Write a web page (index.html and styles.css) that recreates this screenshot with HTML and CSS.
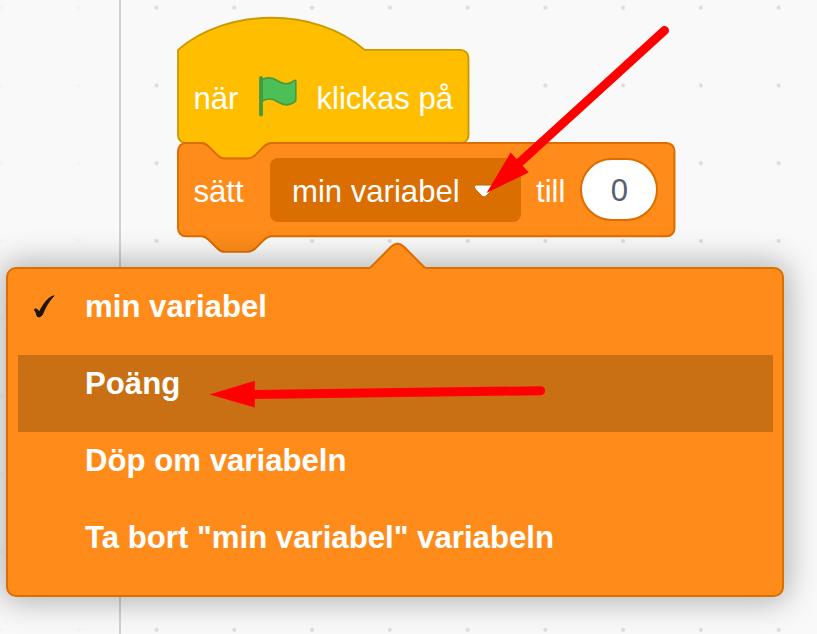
FILE: index.html
```html
<!DOCTYPE html>
<html lang="sv">
<head>
<meta charset="utf-8">
<title>Variabelblock</title>
<link rel="stylesheet" href="styles.css">
</head>
<body>
<main class="workspace">
  <svg class="grid" width="817" height="634" aria-hidden="true">
    <defs>
      <pattern id="dots" x="117.6" y="-31.2" width="77.77" height="77.77" patternUnits="userSpaceOnUse">
        <circle cx="38.9" cy="38.9" r="2.05" fill="#dcdcdc"/>
      </pattern>
    </defs>
    <rect width="817" height="634" fill="url(#dots)"/>
  </svg>
  <div class="flyout"></div>

  <section class="stack">
    <div class="block block-hat">
      <svg class="shape" width="294" height="145" viewBox="0 0 151.2 74.6" aria-hidden="true">
        <path transform="translate(0 20)" fill="#ffbf00" stroke="#cc9900" d="M0,0c25,-22 71,-22 96,0H145.4a4,4 0 0,1 4,4v40a4,4 0 0,1 -4,4H48c-2,0 -3,1 -4,2l-4,4c-1,1 -2,2 -4,2h-12c-2,0 -3,-1 -4,-2l-4,-4c-1,-1 -2,-2 -4,-2H4a4,4 0 0,1 -4,-4z"/>
      </svg>
      <span class="label">när</span>
      <svg class="flag" width="40" height="42" viewBox="0 0 40 42" aria-hidden="true">
        <path d="M3.500 4.500C9 2 15 2.500 20 6C25.500 9.800 31 9.500 35.800 5.800Q37.800 4.500 37.800 6.500V25C37.800 26 37.500 26.500 36.500 27.200C31 31 25.500 30.500 20 27C15 23.200 9 23.300 3.500 26.500Z" fill="#4cbf56" stroke="#45993d" stroke-width="1.600" stroke-linejoin="round"/>
        <path d="M3 3V39.500" stroke="#45993d" stroke-width="3.800" stroke-linecap="round"/>
      </svg>
      <span class="label">klickas på</span>
    </div>
    <div class="block block-set">
      <svg class="shape" width="500" height="114" viewBox="0 0 257.2 58.64" aria-hidden="true">
        <path fill="#ff8c1a" stroke="#db6e00" d="M0,4A4,4 0 0,1 4,0H12c2,0 3,1 4,2l4,4c1,1 2,2 4,2h12c2,0 3,-1 4,-2l4,-4c1,-1 2,-2 4,-2H251.400a4,4 0 0,1 4,4v40a4,4 0 0,1 -4,4H48c-2,0 -3,1 -4,2l-4,4c-1,1 -2,2 -4,2h-12c-2,0 -3,-1 -4,-2l-4,-4c-1,-1 -2,-2 -4,-2H4a4,4 0 0,1 -4,-4z"/>
      </svg>
      <span class="label">sätt</span>
      <div class="dropdown">
        <span>min variabel</span>
        <svg class="caret" width="24" height="18" viewBox="0 0 24 18" aria-hidden="true">
          <path d="M4.500 2H19.500Q23 2.500 20.800 6L14.200 13Q12 15 9.800 13L3.200 6Q1 2.500 4.500 2Z" fill="#fff" stroke="#c46300" stroke-width="1"/>
        </svg>
      </div>
      <span class="label">till</span>
      <div class="number">0</div>
    </div>
  </section>

  <section class="menu">
    <svg class="pointer" width="58" height="28" viewBox="0 0 58 28" aria-hidden="true">
      <path d="M0 28L1.500 25.500L22 4.800Q28.500 -1.600 35 4.800L55.500 25.500L58 28Z" fill="#ff8c1a"/>
      <path d="M1 26L22 4.800Q28.500 -1.600 35 4.800L56 26" fill="none" stroke="#db6e00" stroke-width="2"/>
    </svg>
    <div class="item">
      <svg class="check" width="24" height="26" viewBox="0 0 24 26" aria-hidden="true">
        <path d="M2.300 15.500Q4.500 13.500 7.300 18C11.500 10 15.500 3.500 22 1.800C16.500 7.500 13.500 13 10.200 21Q7.500 24 5.300 22.500Q4.200 18 2.300 15.500Z" fill="#211303" stroke="#211303" stroke-width="1" stroke-linejoin="round"/>
      </svg>
      <span>min variabel</span>
    </div>
    <div class="item item-active"><span>Poäng</span></div>
    <div class="item"><span>Döp om variabeln</span></div>
    <div class="item"><span>Ta bort "min variabel" variabeln</span></div>
  </section>

  <svg class="arrows" width="817" height="634" aria-hidden="true">
    <g fill="#f00" stroke="#f00">
      <path d="M664.500 30.500L518 164" stroke-width="9" stroke-linecap="round"/>
      <path d="M486.500 193L510.700 152.500L528.700 172.500Z" stroke="none"/>
      <path d="M540.700 390.700L254 394.500" stroke-width="9" stroke-linecap="round"/>
      <path d="M209.500 394.400L254.800 380.800V407.500Z" stroke="none"/>
    </g>
  </svg>
</main>
</body>
</html>
```
FILE: styles.css
```css
* {
  box-sizing: border-box;
}

body {
  margin: 0;
  font-family: "Liberation Sans", Arial, sans-serif;
  font-size: 31.1px;
  line-height: 36px;
  color: #fff;
}

.workspace {
  position: relative;
  width: 817px;
  height: 634px;
  overflow: hidden;
  background: #f9f9f9;
}

.grid,
.arrows {
  position: absolute;
  inset: 0;
}

.flyout {
  position: absolute;
  inset: 0 auto 0 0;
  width: 121px;
  background: rgba(249, 249, 249, 0.8);
  border-right: 2px solid #d0d0d0;
}

.stack {
  position: relative;
  padding: 49.3px 0 0 178px;
}

.block {
  position: relative;
  display: flex;
  align-items: center;
  height: 93.3px;
  padding-left: 15.5px;
  white-space: nowrap;
}

.block > * {
  position: relative;
}

.block > .shape {
  position: absolute;
  left: 0;
  top: 0;
  overflow: visible;
}

.block-hat > .shape {
  top: -38.4px;
}

.block-set {
  width: 497px;
}

.label {
  position: relative;
  top: 2.6px;
}

.flag {
  margin: 0 18px 0 20px;
}

.dropdown {
  display: flex;
  align-items: center;
  width: 251px;
  height: 64px;
  margin-left: 26.4px;
  padding: 5px 0 0 22px;
  border-radius: 8px;
  background: #db6e00;
}

.block > .dropdown {
  top: 0.5px;
}

.caret {
  margin-left: 12.5px;
}

.block-set .label + .number {
  margin-left: 15px;
}

.dropdown + .label {
  margin-left: 15px;
}

.number {
  width: 78px;
  height: 63px;
  padding-top: 13px;
  border: 2px solid #db6e00;
  border-radius: 32px;
  background: #fff;
  color: #575e75;
  text-align: center;
}

.menu {
  position: relative;
  width: 778px;
  height: 330px;
  margin: 31px 0 0 6px;
  padding: 9px 9px 0 10px;
  border: 2px solid #db6e00;
  border-radius: 10px;
  background: #ff8c1a;
  box-shadow: 0 0 32px 4px rgba(0, 0, 0, 0.3);
  font-weight: 700;
  font-size: 31.18px;
}

.pointer {
  position: absolute;
  left: 361px;
  top: -27px;
}

.item {
  position: relative;
  height: 77px;
  padding: 11px 0 0 67px;
  white-space: nowrap;
}

.item-active {
  background: #c97014;
}

.check {
  position: absolute;
  left: 14px;
  top: 16px;
}
```
